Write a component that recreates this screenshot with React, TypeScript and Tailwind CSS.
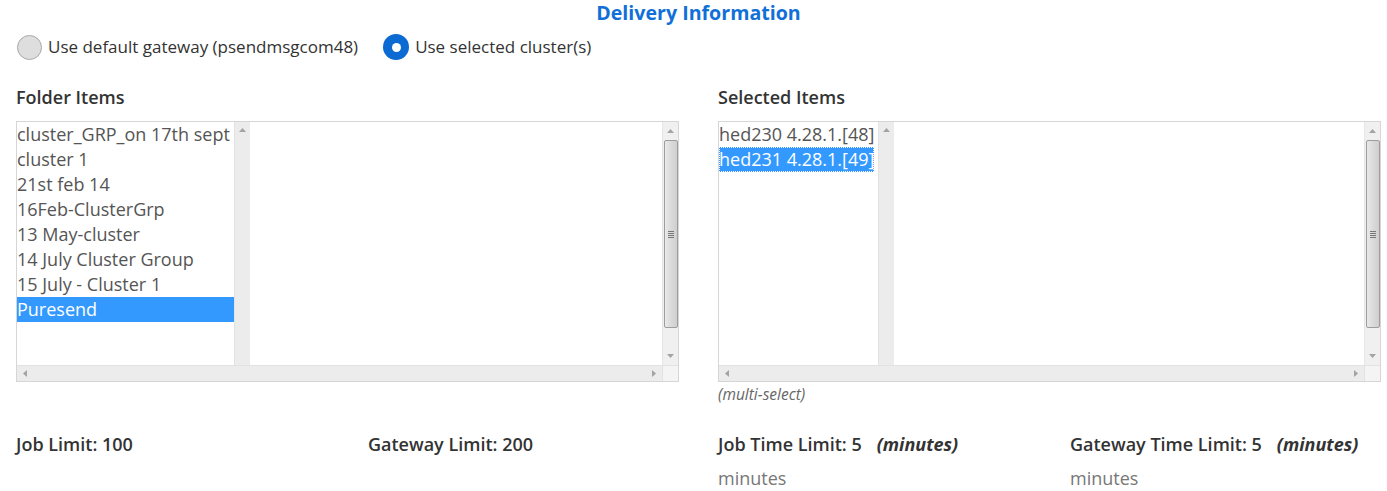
import React from "react";

const folderItems = [
  "cluster_GRP_on 17th sept",
  "cluster 1",
  "21st feb 14",
  "16Feb-ClusterGrp",
  "13 May-cluster",
  "14 July Cluster Group",
  "15 July - Cluster 1",
  "Puresend",
];

const selectedItems = ["hed230 4.28.1.[48]", "hed231 4.28.1.[49]"];

const Arrow: React.FC<{ dir: "up" | "down" | "left" | "right" }> = ({ dir }) => {
  const pts = {
    up: "0,4 3.5,0 7,4",
    down: "0,0 3.5,4 7,0",
    left: "4,0 0,3.5 4,7",
    right: "0,0 4,3.5 0,7",
  }[dir];
  const horiz = dir === "left" || dir === "right";
  return (
    <svg width={horiz ? 4 : 7} height={horiz ? 7 : 4} viewBox={horiz ? "0 0 4 7" : "0 0 7 4"}>
      <polygon points={pts} fill="#a3a3a3" />
    </svg>
  );
};

const ListBox: React.FC<{
  items: string[];
  selected: number;
  listWidth: string;
  dotted?: boolean;
}> = ({ items, selected, listWidth, dotted }) => (
  <div className="flex flex-col h-[261px] border border-[#d6d6d6] bg-white">
    <div className="flex flex-1 min-h-0">
      <div className="flex-1 flex">
        {/* inner select */}
        <div className="flex">
          <div className={`${listWidth} overflow-hidden`}>
            {items.map((item, i) => (
              <div
                key={item}
                className={`h-[25px] leading-[25px] whitespace-nowrap text-[18px] ${
                  i === selected
                    ? `bg-[#3399ff] text-white ${dotted ? "w-fit outline outline-1 outline-dotted outline-white -outline-offset-1" : ""}`
                    : "text-[#555]"
                }`}
              >
                {item}
              </div>
            ))}
          </div>
          <div className="w-[16px] bg-[#ececec] border-l border-[#e2e2e2] flex justify-center pt-[6px]">
            <Arrow dir="up" />
          </div>
        </div>
      </div>
      {/* outer vertical scrollbar */}
      <div className="w-[16px] bg-[#f0f0f0] border-l border-[#e6e6e6] flex flex-col items-center">
        <div className="h-[18px] flex items-center">
          <Arrow dir="up" />
        </div>
        <div className="w-[14px] h-[188px] rounded-[2px] border border-[#9d9d9d] bg-gradient-to-r from-[#e9e9e9] via-[#dadada] to-[#cfcfcf] flex flex-col items-center justify-center gap-[1px]">
          <div className="w-[6px] h-px bg-[#777]" />
          <div className="w-[6px] h-px bg-[#777]" />
          <div className="w-[6px] h-px bg-[#777]" />
          <div className="w-[6px] h-px bg-[#777]" />
        </div>
        <div className="flex-1 flex items-end pb-[7px]">
          <Arrow dir="down" />
        </div>
      </div>
    </div>
    {/* horizontal scrollbar */}
    <div className="h-[16px] flex border-t border-[#e2e2e2]">
      <div className="flex-1 bg-[#ececec] flex items-center justify-between px-[6px]">
        <Arrow dir="left" />
        <Arrow dir="right" />
      </div>
      <div className="w-[16px] bg-[#f4f4f4] border-l border-[#e2e2e2]" />
    </div>
  </div>
);

const App: React.FC = () => {
  return (
    <main
      className="w-[1387px] h-[491px] bg-white pl-[16px] pr-[6px] pt-px overflow-hidden"
      style={{ fontFamily: '"Open Sans", sans-serif' }}
    >
      <h1 className="text-center text-[19.6px] font-bold text-[#1170d8] leading-[23px]">
        Delivery Information
      </h1>

      {/* Radios */}
      <div className="flex items-center mt-[10px] h-[26px] text-[17px] text-[#333]">
        <span className="w-[25px] h-[25px] rounded-full bg-[#dedede] border border-[#a9a9a9] mr-[6px] ml-px" />
        <span>Use default gateway (psendmsgcom48)</span>
        <span className="w-[26px] h-[26px] rounded-full bg-[#0b6bd3] flex items-center justify-center ml-[25px] mr-[6px]">
          <span className="w-[9px] h-[9px] rounded-full bg-white" />
        </span>
        <span>Use selected cluster(s)</span>
      </div>

      <div className="grid grid-cols-[663px_663px] gap-x-[39px] mt-[25px]">
        <div>
          <h2 className="text-[18px] font-semibold text-[#333] leading-[24px] mb-[12px]">Folder Items</h2>
          <ListBox items={folderItems} selected={7} listWidth="w-[217px]" />
        </div>
        <div>
          <h2 className="text-[18px] font-semibold text-[#333] leading-[24px] mb-[12px]">Selected Items</h2>
          <ListBox items={selectedItems} selected={1} listWidth="w-[159px]" dotted />
          <p className="text-[15.5px] italic text-[#666] mt-[1px] leading-[22px]">(multi-select)</p>
        </div>
      </div>

      {/* Limits */}
      <div className="grid grid-cols-[352px_350px_352px_311px] mt-[27px] text-[18px] text-[#333]">
        <div className="font-semibold leading-[24px]">Job Limit: 100</div>
        <div className="font-semibold leading-[24px]">Gateway Limit: 200</div>
        <div>
          <div className="font-semibold leading-[24px] whitespace-nowrap">
            Job Time Limit: 5
            <span className="italic font-bold ml-[15px]">(minutes)</span>
          </div>
          <div className="text-[18px] text-[#777] mt-[10px] leading-[24px]">minutes</div>
        </div>
        <div>
          <div className="font-semibold leading-[24px] whitespace-nowrap">
            Gateway Time Limit: 5
            <span className="italic font-bold ml-[15px]">(minutes)</span>
          </div>
          <div className="text-[18px] text-[#777] mt-[10px] leading-[24px]">minutes</div>
        </div>
      </div>
    </main>
  );
};

export default App;
